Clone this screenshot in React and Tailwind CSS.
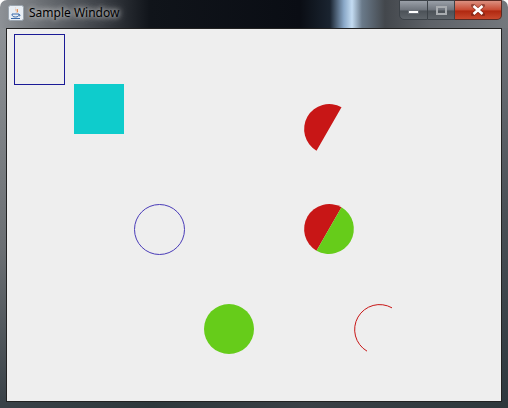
import React from "react";

function JavaIcon() {
  return (
    <svg width="16" height="16" viewBox="0 0 16 16">
      <rect x="0.5" y="0.5" width="15" height="15" rx="2" fill="#e8eef4" stroke="#9aa4ae" />
      <path d="M8 2 C6 4 10 5 7.5 8 C9 6 6.5 5 8 2 Z" fill="#e06a1a" />
      <path d="M9.5 4 C8.5 5 10.5 6 9 7.5" stroke="#e06a1a" strokeWidth="1" fill="none" />
      <path d="M4 9 H11 C11 11 10 12 7.5 12 C5 12 4 11 4 9 Z" fill="none" stroke="#3b6aa8" strokeWidth="1" />
      <path d="M11 9.5 C12.5 9.5 12.5 11 11 11" fill="none" stroke="#3b6aa8" strokeWidth="1" />
      <path d="M3 13.5 H12" stroke="#3b6aa8" strokeWidth="1" />
    </svg>
  );
}

function CloseX() {
  return (
    <svg width="14" height="12" viewBox="0 0 14 12">
      <path d="M2 1.5 L12 10.5 M12 1.5 L2 10.5" stroke="#5a1a10" strokeWidth="4" strokeLinecap="round" opacity="0.5" />
      <path d="M2.5 2 L11.5 10 M11.5 2 L2.5 10" stroke="#ffffff" strokeWidth="2.6" />
    </svg>
  );
}

export default function App() {
  return (
    <div
      className="w-[508px] h-[408px] flex flex-col rounded-t-[7px] overflow-hidden"
      style={{ fontFamily: '"Noto Sans", "Open Sans", sans-serif' }}
    >
      {/* title bar */}
      <div className="h-[28px] flex items-start bg-[linear-gradient(90deg,#8d9196_0px,#6c7075_40px,#3c4046_100px,#10141a_150px,#0a0d14_300px,#1a2430_330px,#8aa8c8_344px,#c4dcf2_352px,#6a7a8a_362px,#43474c_385px,#5e6268_430px,#74787d_508px)]">
        <div className="flex items-center h-[24px] pl-[8px] gap-[5px] pt-[2px]">
          <JavaIcon />
          <span className="text-[12px] text-black [text-shadow:0_0_5px_#ddd,0_0_8px_#ccc] leading-none">
            Sample Window
          </span>
        </div>
        <div className="ml-auto mr-[6px] flex h-[20px]">
          <div className="w-[29px] h-[20px] rounded-bl-[5px] border border-[#3c4248] bg-[linear-gradient(180deg,#9aa0a8,#6e747c_50%,#4c5258_55%,#5e646a)] flex items-center justify-center">
            <div className="w-[11px] h-[4px] bg-white border border-[#6a7078] mt-[4px]" />
          </div>
          <div className="w-[27px] h-[20px] border-y border-r border-[#3c4248] bg-[linear-gradient(180deg,#9aa0a8,#6e747c_50%,#4c5258_55%,#5e646a)] flex items-center justify-center">
            <div className="w-[11px] h-[9px] border-2 border-[#a8acb0]" />
          </div>
          <div className="w-[47px] h-[20px] rounded-br-[5px] border-y border-r border-[#5a2a22] bg-[linear-gradient(180deg,#dc9080,#c84a32_50%,#b02810_55%,#c8482c)] flex items-center justify-center">
            <CloseX />
          </div>
        </div>
      </div>
      {/* middle */}
      <div className="flex flex-1">
        <div className="w-[6px] bg-[linear-gradient(180deg,#8e9296,#6a6e72_60%,#3a4248)]" />
        <div className="w-[496px] h-[374px] border border-[#222] bg-[#eeeeee]">
          <svg width="494" height="372" viewBox="7 29 494 372" className="block">
            <rect x="14.5" y="34.5" width="50" height="50" fill="none" stroke="#1a1a96" strokeWidth="1" />
            <rect x="74" y="84" width="50" height="50" fill="#0ecccc" />
            <path d="M329 129 L341.5 107.35 A25 25 0 0 0 316.5 150.65 Z" fill="#c81616" />
            <circle cx="159.5" cy="229.5" r="25" fill="none" stroke="#4a3cb8" strokeWidth="1" />
            <path d="M329 229 L341.5 207.35 A25 25 0 0 0 316.5 250.65 Z" fill="#c81616" />
            <path d="M329 229 L316.5 250.65 A25 25 0 0 0 341.5 207.35 Z" fill="#66cc1a" />
            <circle cx="229" cy="329" r="25" fill="#66cc1a" />
            <path d="M392 307.85 A25 25 0 0 0 367 351.15" fill="none" stroke="#c81616" strokeWidth="1" />
          </svg>
        </div>
        <div className="w-[6px] bg-[linear-gradient(180deg,#70747a,#4a5056_50%,#2e383e)]" />
      </div>
      <div className="h-[6px] bg-[linear-gradient(90deg,#3a4248,#2e383c_30%,#3a4046_60%,#2e383c)]" />
    </div>
  );
}
